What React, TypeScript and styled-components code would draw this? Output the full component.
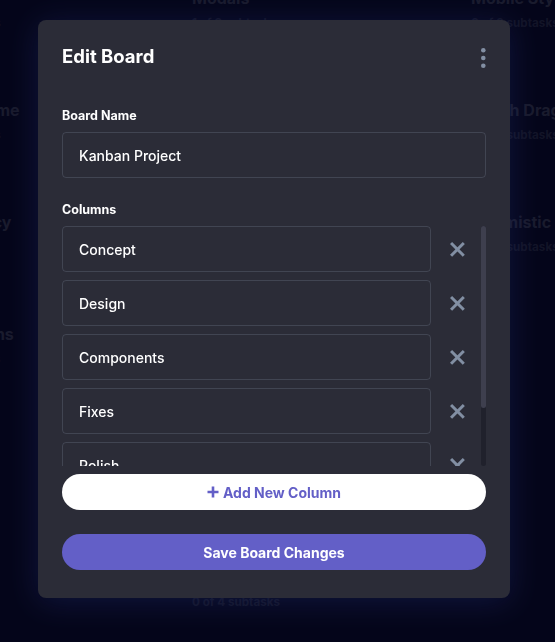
import React from "react";
import styled, { createGlobalStyle } from "styled-components";

const GlobalStyle = createGlobalStyle`
  * { box-sizing: border-box; }
  html, body { margin: 0; height: 100%; overflow: hidden; }
  body {
    background: #090b34;
    font-family: Inter, "Noto Sans", sans-serif;
  }
`;

/* ---------- board behind the modal ---------- */

const Board = styled.div`
  display: flex;
  gap: 24px;
  margin: -34px 0 0 -103px;
`;

const Column = styled.div`
  flex: 0 0 255px;
  display: flex;
  flex-direction: column;
  gap: 24px;
`;

const Card = styled.div`
  padding: 23px 16px;
  border-radius: 8px;
`;

const CardTitle = styled.div`
  font-size: 16px;
  line-height: 19px;
  font-weight: 700;
  color: #33365a;
`;

const CardMeta = styled.div`
  margin-top: 8px;
  font-size: 11.7px;
  line-height: 15px;
  font-weight: 700;
  color: #25284e;
`;

type Task = { title: string; done: number; total: number };

const columns: Task[][] = [
  [
    { title: "Auth", done: 0, total: 3 },
    { title: "Toggle theme", done: 0, total: 3 },
    { title: "Data privacy", done: 1, total: 3 },
    { title: "Notifications", done: 0, total: 2 },
  ],
  [
    { title: "Modals", done: 1, total: 3 },
    { title: "Board forms", done: 2, total: 3 },
    { title: "Task details", done: 0, total: 2 },
    { title: "Sidebar toggle and board switching", done: 1, total: 4 },
    { title: "Empty states", done: 0, total: 1 },
    { title: "Local storage", done: 0, total: 4 },
  ],
  [
    { title: "Mobile Styles", done: 0, total: 3 },
    { title: "Touch Drag & Drop", done: 0, total: 3 },
    { title: "Optimistic Updates", done: 0, total: 3 },
  ],
];

/* ---------- modal ---------- */

const Overlay = styled.div`
  position: fixed;
  inset: 0;
  background: rgba(0, 0, 0, 0.5);
  display: flex;
  align-items: flex-start;
  padding: 20px 0 0 38px;
`;

const Modal = styled.div`
  width: 472px;
  background: #2b2c37;
  border-radius: 8px;
  padding: 24px 24px 28px;
  box-shadow: 0 4px 32px rgba(40, 55, 130, 0.35);
  display: flex;
  flex-direction: column;
`;

const Header = styled.div`
  display: flex;
  justify-content: space-between;
  align-items: flex-start;
`;

const Title = styled.h2`
  margin: 0;
  font-size: 18.5px;
  line-height: 24px;
  font-weight: 700;
  color: #ffffff;
`;

const MenuButton = styled.button`
  border: 0;
  background: none;
  padding: 0;
  margin-top: 4px;
  width: 5px;
  height: 20px;
  display: flex;
  cursor: pointer;
`;

const Label = styled.label<{ $top: number }>`
  display: block;
  margin: ${(p) => p.$top}px 0 9px;
  font-size: 12.5px;
  line-height: 15px;
  font-weight: 700;
  color: #ffffff;
`;

const TextInput = styled.input`
  width: 100%;
  height: 46px;
  padding: 0 16px;
  border: 1px solid rgba(130, 143, 163, 0.25);
  border-radius: 4px;
  background: transparent;
  color: #ffffff;
  font-family: inherit;
  font-size: 14px;
  font-weight: 500;
  outline: none;
`;

const ColumnArea = styled.div`
  height: 240px;
  display: flex;
`;

const ColumnList = styled.div`
  flex: 1;
  overflow: hidden;
  display: flex;
  flex-direction: column;
  gap: 8px;
`;

const ScrollTrack = styled.div`
  flex: 0 0 5px;
  border-radius: 3px;
  background: #20212c;
  display: flex;
  flex-direction: column;
`;

const ScrollThumb = styled.div`
  border-radius: 3px;
  background: #3e3f4e;
`;

const ColumnRow = styled.div`
  flex: 0 0 46px;
  display: flex;
  align-items: center;
  gap: 19px;
  padding-right: 16px;
`;

const RemoveButton = styled.button`
  flex: 0 0 15px;
  height: 15px;
  border: 0;
  padding: 0;
  background: none;
  display: flex;
  cursor: pointer;
`;

const PillButton = styled.button<{ $primary?: boolean; $top: number }>`
  margin-top: ${(p) => p.$top}px;
  height: 36px;
  border: 0;
  border-radius: 20px;
  background: ${(p) => (p.$primary ? "#635fc7" : "#ffffff")};
  color: ${(p) => (p.$primary ? "#ffffff" : "#635fc7")};
  font-family: inherit;
  font-size: 14px;
  font-weight: 700;
  display: flex;
  align-items: center;
  justify-content: center;
  gap: 4px;
  cursor: pointer;
`;

const DotsIcon = () => (
  <svg width="5" height="20" viewBox="0 0 5 20">
    <g fill="#828fa3">
      <circle cx="2.3" cy="2.3" r="2.3" />
      <circle cx="2.3" cy="10" r="2.3" />
      <circle cx="2.3" cy="17.7" r="2.3" />
    </g>
  </svg>
);

const CrossIcon = () => (
  <svg width="15" height="15" viewBox="0 0 15 15">
    <g fill="#828fa3" fillRule="evenodd">
      <path d="m12.728 0 2.122 2.122L2.122 14.85 0 12.728z" />
      <path d="M0 2.122 2.122 0 14.85 12.728l-2.122 2.122z" />
    </g>
  </svg>
);

const PlusIcon = () => (
  <svg width="12" height="12" viewBox="0 0 12 12">
    <path d="M6 0.5v11M0.5 6h11" stroke="#635fc7" strokeWidth="2.6" />
  </svg>
);

const boardColumns = ["Concept", "Design", "Components", "Fixes", "Polish", "Launch"];

const LIST_HEIGHT = 240;
const ROW_HEIGHT = 46;
const ROW_GAP = 8;

export default function App() {
  const contentHeight = boardColumns.length * ROW_HEIGHT + (boardColumns.length - 1) * ROW_GAP;
  const thumbHeight = Math.round((LIST_HEIGHT * LIST_HEIGHT) / contentHeight);

  return (
    <>
      <GlobalStyle />
      <Board>
        {columns.map((tasks, ci) => (
          <Column key={ci}>
            {tasks.map((t) => (
              <Card key={t.title}>
                <CardTitle>{t.title}</CardTitle>
                <CardMeta>{`${t.done} of ${t.total} subtasks`}</CardMeta>
              </Card>
            ))}
          </Column>
        ))}
      </Board>

      <Overlay>
        <Modal>
          <Header>
            <Title>Edit Board</Title>
            <MenuButton aria-label="Board options">
              <DotsIcon />
            </MenuButton>
          </Header>

          <Label $top={40} htmlFor="board-name">
            Board Name
          </Label>
          <TextInput id="board-name" defaultValue="Kanban Project" />

          <Label $top={24}>Columns</Label>
          <ColumnArea>
            <ColumnList>
              {boardColumns.map((name) => (
                <ColumnRow key={name}>
                  <TextInput defaultValue={name} />
                  <RemoveButton aria-label={`Remove ${name}`}>
                    <CrossIcon />
                  </RemoveButton>
                </ColumnRow>
              ))}
            </ColumnList>
            <ScrollTrack>
              <ScrollThumb style={{ height: thumbHeight }} />
            </ScrollTrack>
          </ColumnArea>

          <PillButton $top={8}>
            <PlusIcon />
            Add New Column
          </PillButton>
          <PillButton $primary $top={24}>
            Save Board Changes
          </PillButton>
        </Modal>
      </Overlay>
    </>
  );
}
